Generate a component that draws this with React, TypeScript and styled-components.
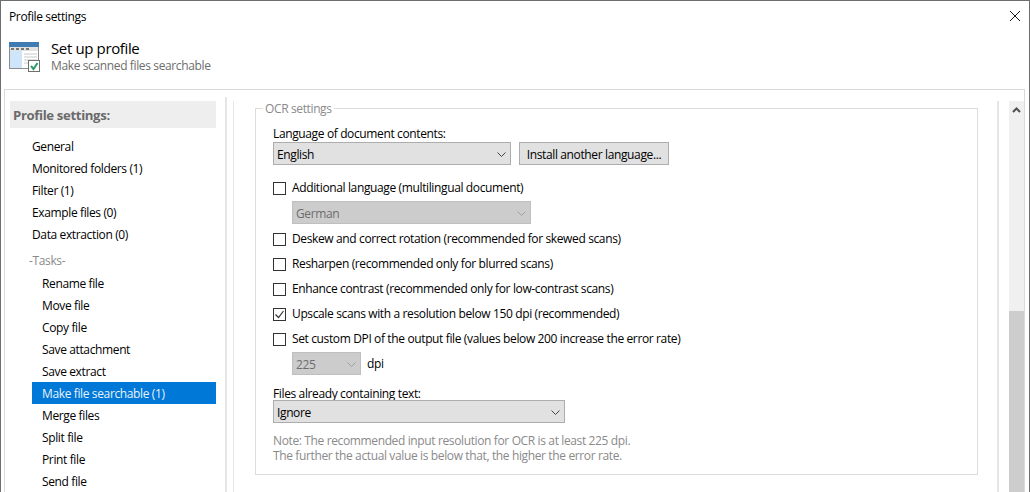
import styled, { createGlobalStyle } from 'styled-components';

const GlobalStyle = createGlobalStyle`
  html, body {
    margin: 0;
    padding: 0;
    background: #ffffff;
  }
  * {
    box-sizing: border-box;
  }
`;

const Window = styled.div`
  width: 1030px;
  height: 492px;
  overflow: hidden;
  background: #ffffff;
  border: 1px solid #6f6f6f;
  border-bottom: none;
  display: flex;
  flex-direction: column;
  font-family: 'Open Sans', 'Noto Sans', sans-serif;
  font-size: 12px;
  letter-spacing: -0.37px;
  color: #000000;
`;

const TitleBar = styled.div`
  height: 30px;
  flex: none;
  padding: 0 9px 0 8px;
  display: flex;
  align-items: center;
  justify-content: space-between;
`;

const Header = styled.div`
  height: 58px;
  flex: none;
  padding: 11px 0 0 8px;
  display: flex;
  gap: 10px;
`;

const HeaderText = styled.div`
  display: flex;
  flex-direction: column;
`;

const HeaderTitle = styled.div`
  margin: -2px 0 1px;
  font-size: 15px;
  line-height: 17px;
`;

const HeaderSub = styled.div`
  color: #6d6d6d;
  line-height: 16px;
`;

const Panel = styled.div`
  flex: 1;
  min-height: 0;
  margin: 0 4px 0 3px;
  border: 1px solid #dadada;
  border-bottom: none;
  display: flex;
  overflow: hidden;
`;

const Sidebar = styled.div`
  width: 222px;
  flex: none;
  margin-top: 7px;
  padding: 4px 9px 0 5px;
  border-right: 2px solid #e6e6e6;
`;

const SidebarTitle = styled.div`
  height: 27px;
  background: #eeeeee;
  padding-left: 3px;
  margin-bottom: 7px;
  color: #6a6a6a;
  font-size: 13.2px;
  font-weight: 700;
  line-height: 29px;
`;

const NavItem = styled.div<{ $level?: number; $active?: boolean }>`
  height: 22px;
  padding-top: 1px;
  line-height: 22px;
  margin-left: ${props => (props.$level === 2 ? '22px' : '0')};
  padding-left: ${props => (props.$level === 2 ? '10px' : '22px')};
  background: ${props => (props.$active ? '#0078d7' : 'transparent')};
  color: ${props => (props.$active ? '#e6f2fb' : '#000000')};
`;

const NavGroup = styled.div`
  height: 27px;
  line-height: 26px;
  padding: 3px 0 0 19px;
  color: #8a8a8a;
`;

const ContentPane = styled.div`
  flex: 1;
  min-width: 0;
  margin: 11px 10px 0 6px;
  padding: 0 19px 0 21px;
  border-left: 1px solid #e8e8e8;
  border-right: 2px solid #e6e6e6;
`;

const GroupBox = styled.fieldset`
  margin: 0;
  padding: 0 0 11px 17px;
  min-width: 0;
  height: 374px;
  border: 1px solid #dcdcdc;
`;

const GroupLegend = styled.legend`
  margin-left: -10px;
  padding: 0 2px;
  line-height: 15px;
  color: #8a8a8a;
`;

const FieldLabel = styled.div<{ $top: number }>`
  margin-top: ${props => props.$top}px;
  height: 16px;
  line-height: 16px;
`;

const ComboRow = styled.div<{ $top?: number; $indent?: boolean }>`
  margin-top: ${props => props.$top ?? 0}px;
  margin-left: ${props => (props.$indent ? '19px' : '0')};
  display: flex;
  align-items: center;
  gap: 8px;
`;

const Combo = styled.div<{ $width: number; $disabled?: boolean }>`
  width: ${props => props.$width}px;
  height: 23px;
  padding: 2px 4px 0 3px;
  display: flex;
  align-items: center;
  justify-content: space-between;
  background: ${props => (props.$disabled ? '#cccccc' : '#e1e1e1')};
  border: 1px solid ${props => (props.$disabled ? '#bfbfbf' : '#adadad')};
  color: ${props => (props.$disabled ? '#6d6d6d' : '#000000')};
`;

const Button = styled.div`
  width: 150px;
  height: 23px;
  line-height: 23px;
  text-align: center;
  background: #e1e1e1;
  border: 1px solid #adadad;
`;

const Suffix = styled.span`
  margin-left: -2px;
`;

const CheckRow = styled.div<{ $top: number }>`
  margin-top: ${props => props.$top}px;
  height: 16px;
  line-height: 16px;
  display: flex;
  align-items: center;
  gap: 6px;
`;

const CheckBox = styled.div`
  width: 13px;
  height: 13px;
  flex: none;
  border: 1px solid #333333;
  background: #ffffff;
  display: flex;
`;

const Note = styled.div`
  margin-top: 10px;
  line-height: 15px;
  color: #8a8a8a;
`;

const Scrollbar = styled.div`
  width: 15px;
  flex: none;
  margin-top: 11px;
  background: #f0f0f0;
  display: flex;
  flex-direction: column;
`;

const ScrollArrow = styled.div`
  height: 17px;
  display: flex;
  align-items: center;
  justify-content: center;
`;

const ScrollThumb = styled.div`
  margin-top: 193px;
  flex: 1;
  background: #cdcdcd;
`;

function Chevron({ color }: { color: string }) {
  return (
    <svg width="9" height="5" viewBox="0 0 9 5">
      <path d="M.5.5l4 4 4-4" fill="none" stroke={color} strokeWidth="1" />
    </svg>
  );
}

function ProfileIcon() {
  return (
    <svg width="32" height="30" viewBox="0 0 32 30" style={{ flex: 'none' }}>
      <rect x="0.5" y="0.5" width="29" height="26" fill="#ffffff" stroke="#8c8c8c" />
      <rect x="0" y="0" width="30" height="5" fill="#3f7cb4" />
      <rect x="1" y="5" width="28" height="4" fill="#e2e2e2" />
      <path d="M2 7h3M7 7h3M12 7h3M17 7h3" stroke="#777777" strokeWidth="2" />
      <rect x="1" y="9" width="12" height="17" fill="#cfe6fa" />
      <path d="M15 12h13M15 15h13M15 18h13M15 21h6" stroke="#c8c8c8" />
      <rect x="19.5" y="18.5" width="11" height="11" fill="#ffffff" stroke="#6f6f6f" />
      <path d="M22 24l2.5 3 4-6" fill="none" stroke="#2f9a6e" strokeWidth="2" />
    </svg>
  );
}

const CloseIcon = () => (
  <svg width="10" height="10" viewBox="0 0 10 10">
    <path d="M0 0l10 10M10 0L0 10" stroke="#1a1a1a" strokeWidth="1" />
  </svg>
);

const CheckMark = () => (
  <svg width="11" height="11" viewBox="0 0 11 11">
    <path d="M1.5 5.5l3 3 5-6.5" fill="none" stroke="#333333" strokeWidth="1.2" />
  </svg>
);

const generalItems = [
  'General',
  'Monitored folders (1)',
  'Filter (1)',
  'Example files (0)',
  'Data extraction (0)',
];

const taskItems = [
  'Rename file',
  'Move file',
  'Copy file',
  'Save attachment',
  'Save extract',
  'Make file searchable (1)',
  'Merge files',
  'Split file',
  'Print file',
  'Send file',
];

export default function App() {
  return (
    <>
      <GlobalStyle />
      <Window>
        <TitleBar>
          <span>Profile settings</span>
          <CloseIcon />
        </TitleBar>
        <Header>
          <ProfileIcon />
          <HeaderText>
            <HeaderTitle>Set up profile</HeaderTitle>
            <HeaderSub>Make scanned files searchable</HeaderSub>
          </HeaderText>
        </Header>
        <Panel>
          <Sidebar>
            <SidebarTitle>Profile settings:</SidebarTitle>
            {generalItems.map(item => (
              <NavItem key={item}>{item}</NavItem>
            ))}
            <NavGroup>-Tasks-</NavGroup>
            {taskItems.map(item => (
              <NavItem key={item} $level={2} $active={item.startsWith('Make file')}>
                {item}
              </NavItem>
            ))}
          </Sidebar>
          <ContentPane>
            <GroupBox>
              <GroupLegend>OCR settings</GroupLegend>
              <FieldLabel $top={10}>Language of document contents:</FieldLabel>
              <ComboRow>
                <Combo $width={238}>
                  English
                  <Chevron color="#444444" />
                </Combo>
                <Button>Install another language...</Button>
              </ComboRow>
              <CheckRow $top={15}>
                <CheckBox />
                Additional language (multilingual document)
              </CheckRow>
              <ComboRow $top={5} $indent>
                <Combo $width={239} $disabled>
                  German
                  <Chevron color="#a0a0a0" />
                </Combo>
              </ComboRow>
              <CheckRow $top={7}>
                <CheckBox />
                Deskew and correct rotation (recommended for skewed scans)
              </CheckRow>
              <CheckRow $top={9}>
                <CheckBox />
                Resharpen (recommended only for blurred scans)
              </CheckRow>
              <CheckRow $top={9}>
                <CheckBox />
                Enhance contrast (recommended only for low-contrast scans)
              </CheckRow>
              <CheckRow $top={9}>
                <CheckBox>
                  <CheckMark />
                </CheckBox>
                Upscale scans with a resolution below 150 dpi (recommended)
              </CheckRow>
              <CheckRow $top={9}>
                <CheckBox />
                Set custom DPI of the output file (values below 200 increase the error rate)
              </CheckRow>
              <ComboRow $top={5} $indent>
                <Combo $width={69} $disabled>
                  225
                  <Chevron color="#a0a0a0" />
                </Combo>
                <Suffix>dpi</Suffix>
              </ComboRow>
              <FieldLabel $top={11}>Files already containing text:</FieldLabel>
              <ComboRow $top={-2}>
                <Combo $width={292}>
                  Ignore
                  <Chevron color="#444444" />
                </Combo>
              </ComboRow>
              <Note>
                Note: The recommended input resolution for OCR is at least 225 dpi.
                <br />
                The further the actual value is below that, the higher the error rate.
              </Note>
            </GroupBox>
          </ContentPane>
          <Scrollbar>
            <ScrollArrow>
              <svg width="9" height="6" viewBox="0 0 9 6">
                <path d="M1 5l3.5-3.5L8 5" fill="none" stroke="#505050" strokeWidth="2" />
              </svg>
            </ScrollArrow>
            <ScrollThumb />
          </Scrollbar>
        </Panel>
      </Window>
    </>
  );
}
